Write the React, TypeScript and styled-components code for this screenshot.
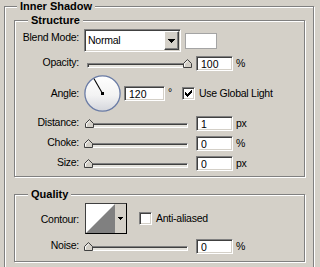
import React from "react";
import styled, { createGlobalStyle } from "styled-components";

const Global = createGlobalStyle`
  html, body { margin: 0; padding: 0; background: #d4d0c8; }
  body {
    font-family: "Liberation Sans", Arial, sans-serif;
    font-size: 10.5px;
    letter-spacing: -0.25px;
    color: #000;
  }
  #root { width: 320px; height: 267px; overflow: hidden; }
`;

const Page = styled.div`
  box-sizing: border-box;
  width: 320px;
  height: 267px;
  padding: 6px 0 0 4px;
  overflow: hidden;
`;

const GroupBox = styled.section<{ $pad: string; $mt?: number; $w: number }>`
  position: relative;
  box-sizing: border-box;
  width: ${(p) => p.$w}px;
  margin-top: ${(p) => p.$mt ?? 0}px;
  padding: ${(p) => p.$pad};
  border: 1px solid #808080;
  box-shadow: inset 1px 1px #fff, 1px 1px #fff;
`;

const Legend = styled.h2<{ $left: number }>`
  position: absolute;
  top: -7px;
  left: ${(p) => p.$left}px;
  margin: 0;
  padding: 0 3px;
  background: #d4d0c8;
  font-size: 11px;
  font-weight: bold;
  line-height: 13px;
  letter-spacing: 0;
  white-space: nowrap;
`;

const Row = styled.div<{ $h: number; $mt?: number }>`
  display: flex;
  align-items: center;
  height: ${(p) => p.$h}px;
  margin-top: ${(p) => p.$mt ?? 0}px;
`;

/* $lift: how many px the label text sits above the row's centre */
const Label = styled.span<{ $lift?: number }>`
  flex: none;
  width: 64px;
  text-align: right;
  white-space: nowrap;
  line-height: 13px;
  padding-bottom: ${(p) => Math.max(0, (p.$lift ?? 1) * 2)}px;
  padding-top: ${(p) => Math.max(0, -(p.$lift ?? 1) * 2)}px;
`;

const Text = styled.span<{ $ml: number }>`
  flex: none;
  margin-left: ${(p) => p.$ml}px;
  white-space: nowrap;
  line-height: 13px;
`;

const Degree = styled.span`
  flex: none;
  align-self: flex-start;
  margin: 12px 0 0 3px;
  line-height: 10px;
`;

const TextBox = styled.input.attrs({ readOnly: true })<{ $w: number; $ml: number }>`
  box-sizing: border-box;
  flex: none;
  width: ${(p) => p.$w}px;
  height: 15px;
  margin: 0 0 0 ${(p) => p.$ml}px;
  padding: 0 0 0 4px;
  background: #fff;
  border: 1px solid;
  border-color: #808080 #fff #fff #808080;
  box-shadow: inset 1px 1px #404040, inset -1px -1px #d4d0c8;
  font: inherit;
  color: #000;
  outline: none;
`;

const SliderWrap = styled.div`
  position: relative;
  flex: none;
  width: 109px;
  height: 9px;
  margin-left: 5px;
`;

const Track = styled.div`
  position: absolute;
  left: 3px;
  bottom: 0;
  width: 101px;
  height: 5px;
  box-sizing: border-box;
  border: 1px solid;
  border-color: #808080 #fff #fff #808080;
  box-shadow: inset 1px 1px #404040;
  background: #e4e2dc;
`;

const Thumb = styled.svg`
  position: absolute;
  bottom: 0;
  display: block;
`;

const Slider = ({ value }: { value: number }) => (
  <SliderWrap>
    <Track />
    <Thumb width="9" height="9" viewBox="0 0 9 9" style={{ left: `${(value / 100) * 99}px` }}>
      <polygon points="0.5,8.5 0.5,4.5 4.5,0.5 8.5,4.5 8.5,8.5" fill="#d4d0c8" stroke="#404040" strokeWidth="1" />
      <polyline points="1.5,7.5 1.5,4.9 4.5,1.9" fill="none" stroke="#fff" strokeWidth="1" />
    </Thumb>
  </SliderWrap>
);

const Select = styled.div`
  display: flex;
  flex: none;
  box-sizing: border-box;
  width: 97px;
  height: 23px;
  margin-left: 5px;
  padding: 1px;
  background: #fff;
  border: 1px solid;
  border-color: #808080 #fff #fff #808080;
  box-shadow: inset 1px 1px #404040, inset -1px -1px #d4d0c8;
`;

const SelectValue = styled.span`
  flex: 1;
  padding-left: 2px;
  line-height: 19px;
`;

const RaisedButton = styled.span`
  display: flex;
  align-items: center;
  justify-content: center;
  box-sizing: border-box;
  width: 15px;
  background: #d4d0c8;
  border: 1px solid;
  border-color: #fff #404040 #404040 #fff;
  box-shadow: inset -1px -1px #808080;
`;

const Swatch = styled.div`
  flex: none;
  box-sizing: border-box;
  width: 32px;
  height: 16px;
  margin-left: 4px;
  background: #fff;
  border: 1px solid #a4a4a4;
`;

const CheckBox = styled.span<{ $ml: number }>`
  display: flex;
  align-items: center;
  justify-content: center;
  flex: none;
  box-sizing: border-box;
  width: 13px;
  height: 13px;
  margin-left: ${(p) => p.$ml}px;
  background: #fff;
  border: 1px solid;
  border-color: #808080 #fff #fff #808080;
  box-shadow: inset 1px 1px #404040, inset -1px -1px #d4d0c8;
`;

const DialSvg = styled.svg`
  flex: none;
  display: block;
  margin-left: 5px;
`;

const ContourPicker = styled.div`
  display: flex;
  flex: none;
  box-sizing: border-box;
  width: 42px;
  height: 31px;
  margin-left: 6px;
  background: #d4d0c8;
  border: 1px solid;
  border-color: #404040 #000 #000 #404040;
`;

const ContourArrow = styled.span`
  flex: 1;
  display: flex;
  align-items: center;
  justify-content: center;
`;

const CheckMark = () => (
  <svg width="7" height="7" viewBox="0 0 7 7">
    <g fill="#000">
      <rect x="0" y="2" width="1" height="3" />
      <rect x="1" y="3" width="1" height="3" />
      <rect x="2" y="4" width="1" height="3" />
      <rect x="3" y="3" width="1" height="3" />
      <rect x="4" y="2" width="1" height="3" />
      <rect x="5" y="1" width="1" height="3" />
      <rect x="6" y="0" width="1" height="3" />
    </g>
  </svg>
);

const DownArrow = ({ big }: { big?: boolean }) =>
  big ? (
    <svg width="7" height="4" viewBox="0 0 7 4">
      <path d="M0 0h7v1h-1v1h-1v1h-1v1h-1v-1h-1v-1h-1v-1h-1z" fill="#000" />
    </svg>
  ) : (
    <svg width="5" height="3" viewBox="0 0 5 3">
      <path d="M0 0h5v1h-1v1h-1v1h-1v-1h-1v-1h-1z" fill="#000" />
    </svg>
  );

const Dial = ({ angle }: { angle: number }) => {
  const r = 17.5;
  const rad = (angle * Math.PI) / 180;
  const x2 = 18.5 + Math.cos(rad) * (r - 0.5);
  const y2 = 18.5 - Math.sin(rad) * (r - 0.5);
  return (
    <DialSvg width="37" height="37" viewBox="0 0 37 37">
      <defs>
        <linearGradient id="dialFill" x1="0" y1="0" x2="0" y2="1">
          <stop offset="0" stopColor="#ffffff" />
          <stop offset="0.55" stopColor="#f3f3f3" />
          <stop offset="1" stopColor="#d4d6dc" />
        </linearGradient>
      </defs>
      <circle cx="18.5" cy="18.5" r="17.6" fill="url(#dialFill)" stroke="#6a7ca6" strokeWidth="1.3" />
      <line x1="18.5" y1="18.5" x2={x2} y2={y2} stroke="#000" strokeWidth="1.1" />
      <rect x="17" y="17" width="3" height="3" fill="#000" />
    </DialSvg>
  );
};

const ContourCurve = () => (
  <svg width="29" height="29" viewBox="0 0 29 29" style={{ display: "block", flex: "none" }}>
    <rect x="0" y="0" width="29" height="29" fill="#fff" />
    <polygon points="0,29 29,0 29,29" fill="#808080" />
  </svg>
);

export default function App() {
  return (
    <>
      <Global />
      <Page>
        <GroupBox $w={310} $pad="13px 8px 20px 9px">
          <Legend $left={12}>Inner Shadow</Legend>

          <GroupBox $w={291} $pad="8px 0 5px 0">
            <Legend $left={13}>Structure</Legend>

            <Row $h={23}>
              <Label $lift={3}>Blend Mode:</Label>
              <Select>
                <SelectValue>Normal</SelectValue>
                <RaisedButton>
                  <DownArrow big />
                </RaisedButton>
              </Select>
              <Swatch />
            </Row>

            <Row $h={15} $mt={4}>
              <Label>Opacity:</Label>
              <Slider value={100} />
              <TextBox $w={37} $ml={3} value="100" />
              <Text $ml={3}>%</Text>
            </Row>

            <Row $h={37} $mt={4}>
              <Label $lift={0}>Angle:</Label>
              <Dial angle={120} />
              <TextBox $w={41} $ml={3} value="120" />
              <Degree>°</Degree>
              <CheckBox $ml={10}>
                <CheckMark />
              </CheckBox>
              <Text $ml={4}>Use Global Light</Text>
            </Row>

            <Row $h={15} $mt={4}>
              <Label>Distance:</Label>
              <Slider value={1} />
              <TextBox $w={37} $ml={3} value="1" />
              <Text $ml={3}>px</Text>
            </Row>

            <Row $h={15} $mt={5}>
              <Label>Choke:</Label>
              <Slider value={0} />
              <TextBox $w={37} $ml={3} value="0" />
              <Text $ml={3}>%</Text>
            </Row>

            <Row $h={15} $mt={5}>
              <Label>Size:</Label>
              <Slider value={0} />
              <TextBox $w={37} $ml={3} value="0" />
              <Text $ml={3}>px</Text>
            </Row>
          </GroupBox>

          <GroupBox $w={291} $mt={17} $pad="8px 0 7px 0">
            <Legend $left={13}>Quality</Legend>

            <Row $h={31}>
              <Label $lift={-1}>Contour:</Label>
              <ContourPicker>
                <ContourCurve />
                <ContourArrow>
                  <DownArrow />
                </ContourArrow>
              </ContourPicker>
              <CheckBox $ml={12} />
              <Text $ml={4}>Anti-aliased</Text>
            </Row>

            <Row $h={15} $mt={5}>
              <Label>Noise:</Label>
              <Slider value={0} />
              <TextBox $w={37} $ml={3} value="0" />
              <Text $ml={3}>%</Text>
            </Row>
          </GroupBox>
        </GroupBox>
      </Page>
    </>
  );
}
